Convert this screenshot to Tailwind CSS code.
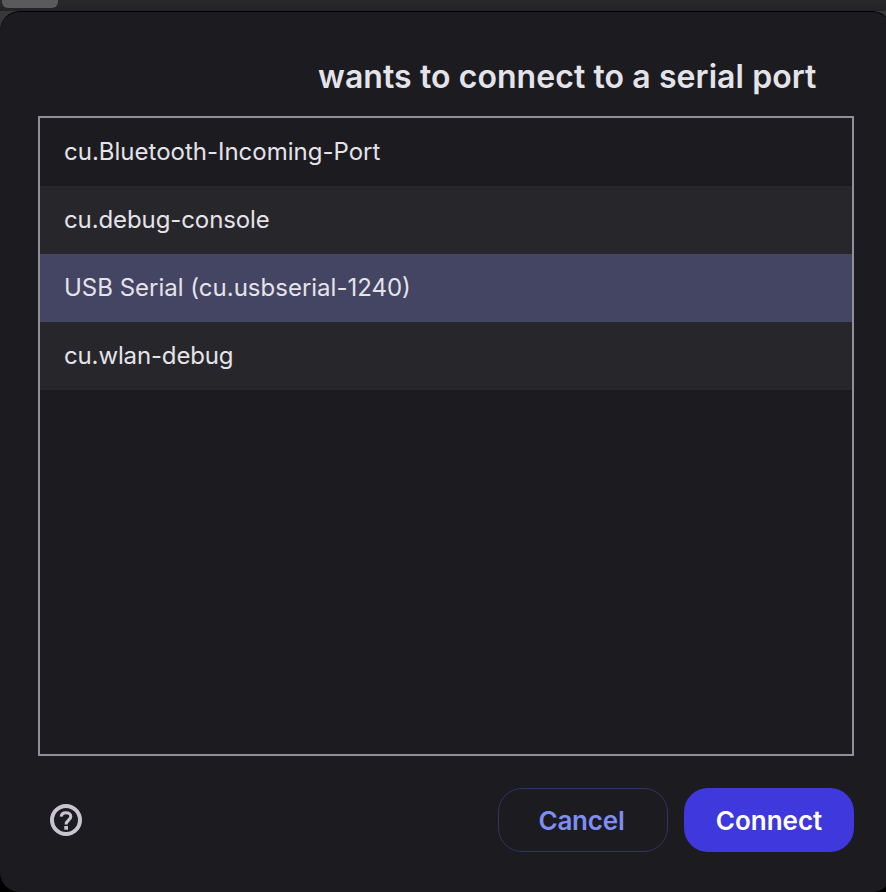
<!DOCTYPE html>
<html lang="en">
<head>
    <meta charset="UTF-8">
    <meta name="viewport" content="width=device-width, initial-scale=1.0">
    <title>Serial port</title>
    <!-- Tailwind CSS -->
    <script src="https://cdn.jsdelivr.net/npm/@tailwindcss/browser@4"></script>
</head>
<body class="bg-black h-screen overflow-hidden flex flex-col font-['Inter',sans-serif] text-[#e4e3ea]">
<!-- Browser window behind the dialog -->
<div class="h-[11px] shrink-0 bg-linear-to-b from-[#29292c] to-[#232326]">
    <div class="ml-0.5 w-14 h-2 rounded-b-md bg-[#5a5a5c]"></div>
</div>

<div class="grow min-h-0 bg-linear-to-b from-[#38383a] from-0% via-[#38383a] via-10% to-black to-10%">
    <!-- Dialog, its right edge runs past the window -->
    <main class="h-full -mr-1.5 flex flex-col rounded-[20px] border-t border-black bg-[#1c1b1f] pl-[38px] pr-[38px]">
        <h1 class="mt-[45px] pl-[280px] text-[32px] leading-10 font-semibold tracking-[0.08px] whitespace-nowrap">wants to connect to a serial port</h1>

        <!-- Port list -->
        <ul class="mt-[19px] h-[640px] shrink-0 border-2 border-[#918f9a] text-2xl">
            <li class="h-[68px] px-6 flex items-center"><span>cu.Bluetooth-Incoming-Port</span></li>
            <li class="h-[68px] px-6 flex items-center bg-[#27262b]"><span class="tracking-[-0.1px]">cu.debug-console</span></li>
            <li class="h-[68px] px-6 flex items-center bg-[#444463]"><span>USB Serial (cu.usbserial-1240)</span></li>
            <li class="h-[68px] px-6 flex items-center bg-[#27262b]"><span class="tracking-[-0.14px]">cu.wlan-debug</span></li>
        </ul>

        <!-- Buttons -->
        <div class="mt-8 flex items-center">
            <button class="ml-3" aria-label="Help">
                <svg class="size-8" viewBox="0 0 32 32" fill="none" stroke="#c8c5d0">
                    <circle cx="16" cy="16" r="14" stroke-width="4"/>
                    <path d="M11.2 12.7C11.4 10.1 13.4 8.7 16 8.7C18.7 8.7 20.8 10.2 20.8 12.6C20.8 16 16.1 16.2 16.1 20.6" stroke-width="3.1"/>
                    <rect x="14.3" y="22" width="3.7" height="3.7" fill="#c8c5d0" stroke="none"/>
                </svg>
            </button>
            <button class="ml-auto w-[170px] h-16 pr-[3px] rounded-3xl border border-[#333265] text-[26px] font-semibold tracking-[-0.2px] text-[#7f8ef5]"><span>Cancel</span></button>
            <button class="ml-4 w-[170px] h-16 rounded-3xl bg-[#3f38dd] text-[26px] font-semibold text-white"><span>Connect</span></button>
        </div>
    </main>
</div>
</body>
</html>
